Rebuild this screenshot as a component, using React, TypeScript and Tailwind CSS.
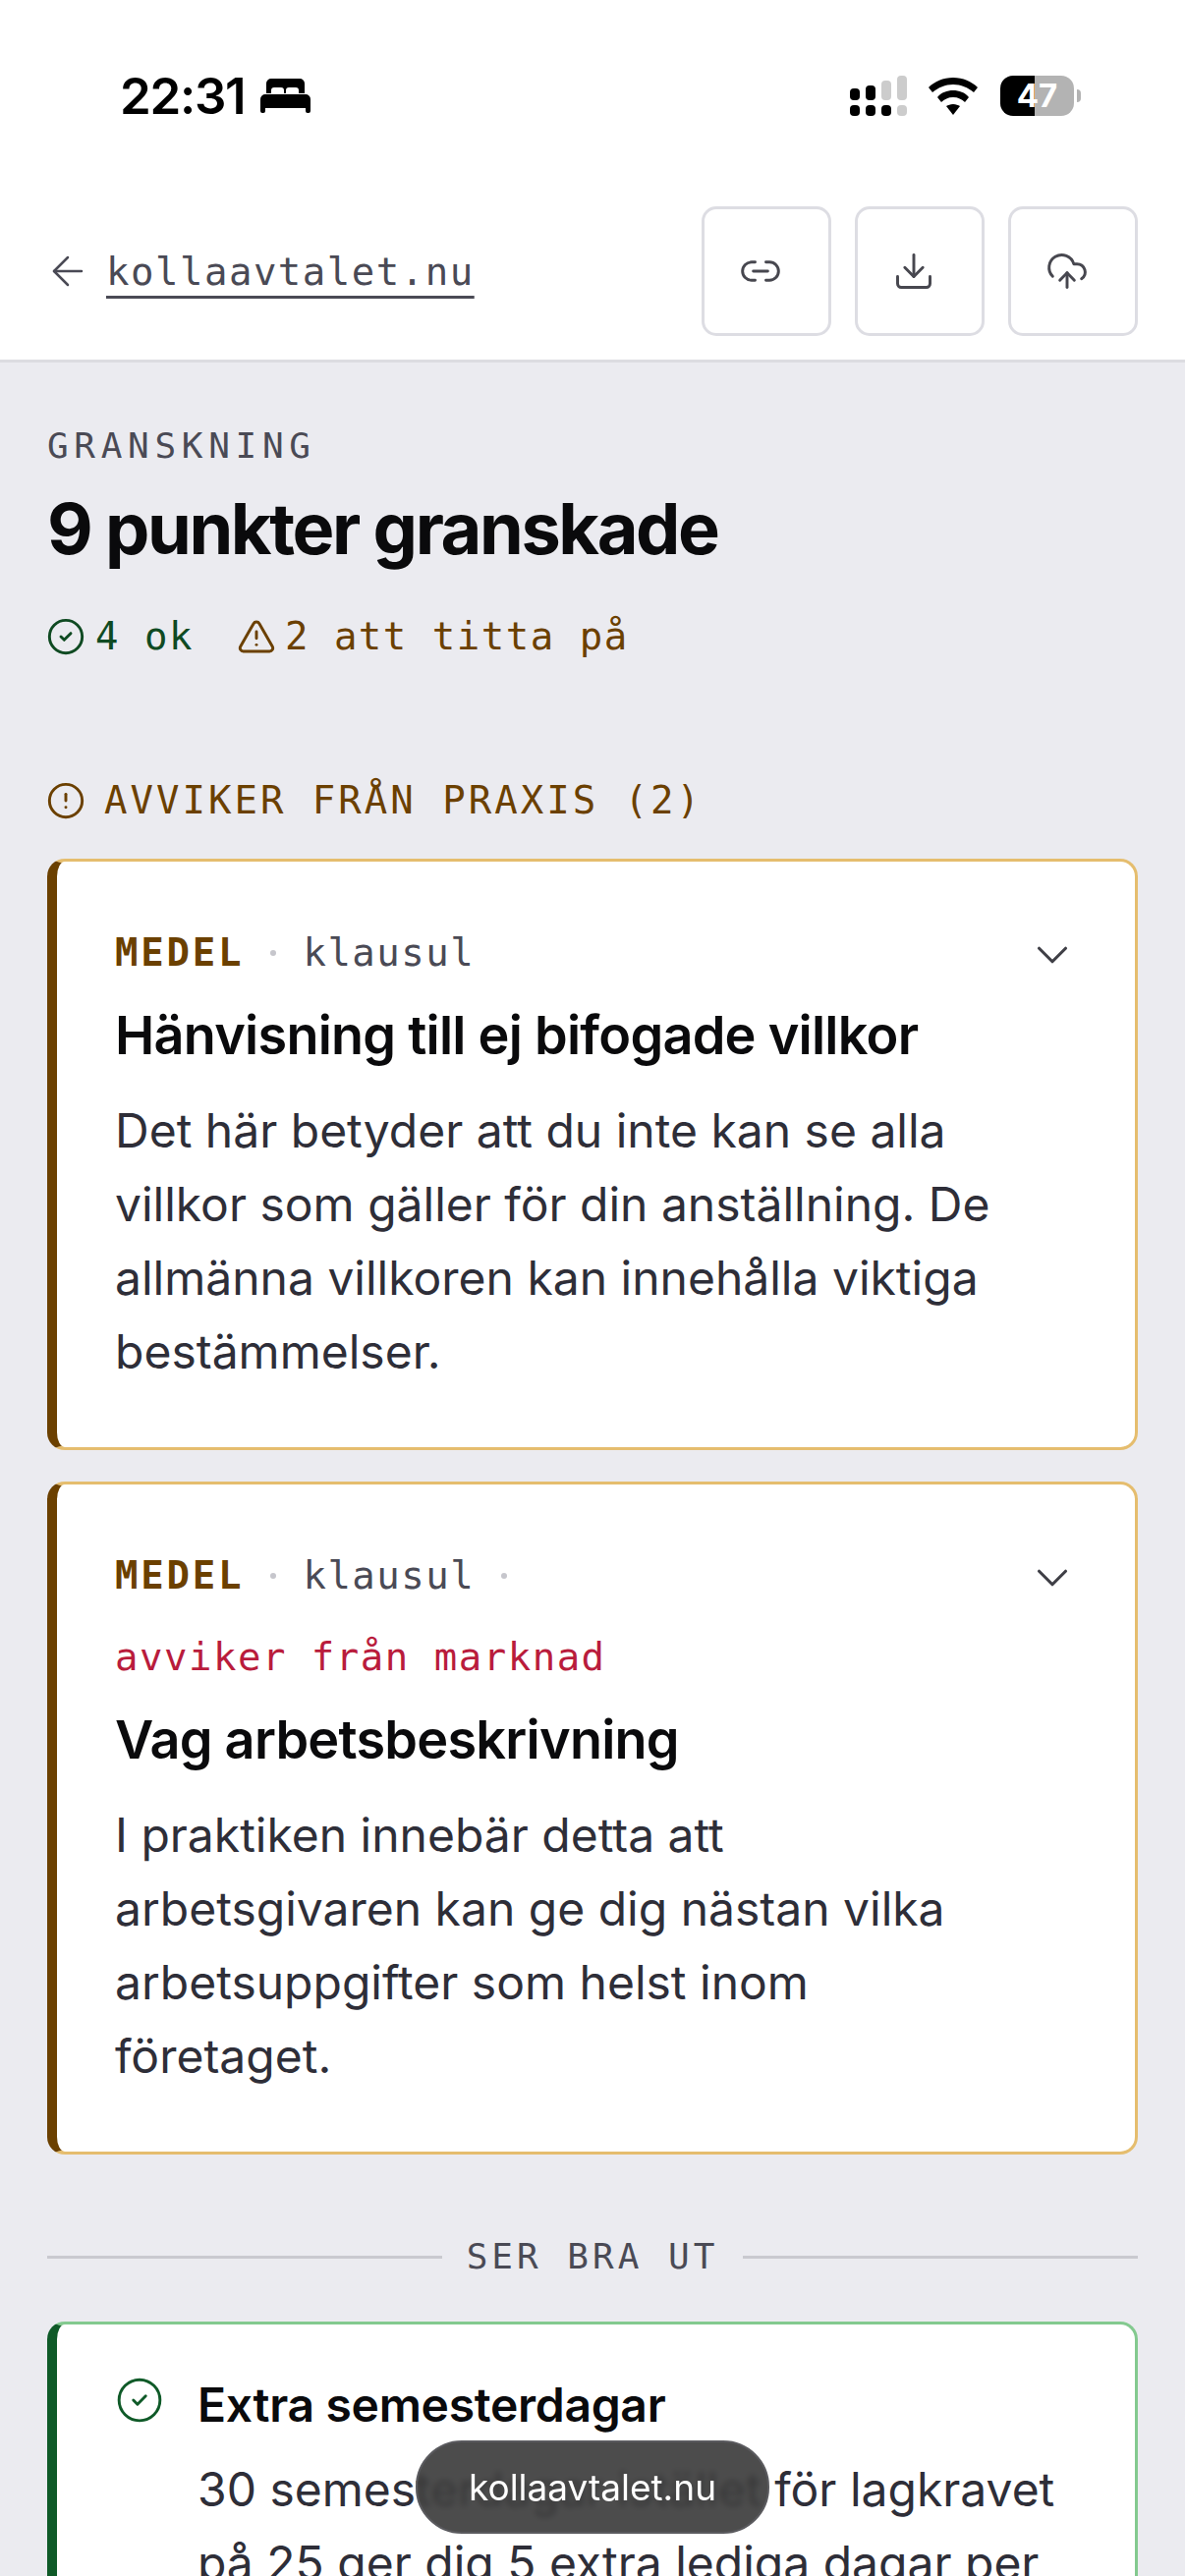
import { AlertTriangle, ArrowLeft, ChevronDown, CircleAlert, CircleCheck, CloudUpload, Download, Link2 } from "lucide-react"

const MONO = "font-['DejaVu_Sans_Mono',monospace]"

function Bed() {
  return (
    <svg viewBox="0 0 51 35" className="w-[51px] h-[35px] ml-[16px]" fill="black">
      <path d="M6 15V5a5 5 0 0 1 5-5h29a5 5 0 0 1 5 5v10h-6v-3a3 3 0 0 0-3-3h-7a3 3 0 0 0-3 3v3h-2v-3a3 3 0 0 0-3-3h-7a3 3 0 0 0-3 3v3z" />
      <path d="M5 16h41a5 5 0 0 1 5 5v9H0v-9a5 5 0 0 1 5-5zM0 30h5v3a2 2 0 0 1-2 2H2a2 2 0 0 1-2-2zM46 30h5v3a2 2 0 0 1-2 2h-1a2 2 0 0 1-2-2z" />
    </svg>
  )
}

function StatusIcons() {
  return (
    <div className="flex items-center">
      <svg viewBox="0 0 58 41" className="w-[58px] h-[41px]">
        <rect x="0" y="13" width="10" height="12" rx="4" fill="black" />
        <rect x="16" y="10" width="10" height="15" rx="4" fill="black" />
        <rect x="32" y="5" width="10" height="20" rx="4" fill="#cccccc" />
        <rect x="48" y="0" width="10" height="25" rx="4" fill="#cccccc" />
        <rect x="0" y="30" width="10" height="11" rx="4" fill="black" />
        <rect x="16" y="30" width="10" height="11" rx="4" fill="black" />
        <rect x="32" y="30" width="10" height="11" rx="4" fill="black" />
        <rect x="48" y="30" width="10" height="11" rx="4" fill="#cccccc" />
      </svg>
      <svg viewBox="0 0 50 38" className="w-[50px] h-[38px] ml-[22px]" fill="black">
        <path d="M25 0c10 0 19 4 25 10l-4 5C40 10 33 7 25 7S10 10 4 15L0 10C6 4 15 0 25 0z" />
        <path d="M25 13c6 0 12 2 16 7l-4 5c-3-3-7-5-12-5s-9 2-12 5l-4-5c4-5 10-7 16-7z" />
        <path d="M25 27c3 0 5 1 7 2l-7 9-7-9c2-1 4-2 7-2z" />
      </svg>
      <div className="ml-[23px] w-[75px] h-[41px] rounded-[13px] flex items-center justify-center bg-[linear-gradient(90deg,#000000_47%,#b3b3b3_47%)] text-white font-['Inter',sans-serif] font-bold text-[33px] leading-none">
        47
      </div>
      <div className="ml-[3px] w-[4px] h-[13px] rounded-r-full bg-[#b3b3b3]" />
    </div>
  )
}

function IconButton({ children }: { children: React.ReactNode }) {
  return (
    <button className="w-[132px] h-[132px] rounded-[15px] border-[3px] border-[#dddde3] bg-white flex items-center justify-center text-[#47474f] pr-[12px]">
      {children}
    </button>
  )
}

function Header() {
  return (
    <header className="bg-white border-b-[3px] border-[#dcdce1]">
      <div className="h-[210px] pl-[122px] pr-[106px] pb-[92px] flex items-end justify-between">
        <div className="flex items-center h-[41px]">
          <span className="font-['Inter',sans-serif] font-semibold text-[51px] leading-none tracking-[-1.3px] text-black">22:31</span>
          <Bed />
        </div>
        <StatusIcons />
      </div>
      <div className="flex items-center justify-between pl-[45px] pr-[48px] pb-[24px]">
        <a className={`flex items-center gap-[15px] text-[39px] leading-none tracking-[1.5px] text-[#4a4a55] ${MONO}`}>
          <ArrowLeft className="w-[48px] h-[48px]" strokeWidth={1.25} />
          <span className="underline decoration-[3px] underline-offset-[11px]">kollaavtalet.nu</span>
        </a>
        <div className="flex gap-[24px]">
          <IconButton><Link2 className="w-[44px] h-[44px]" strokeWidth={1.6} /></IconButton>
          <IconButton><Download className="w-[44px] h-[44px]" strokeWidth={1.6} /></IconButton>
          <IconButton><CloudUpload className="w-[44px] h-[44px]" strokeWidth={1.6} /></IconButton>
        </div>
      </div>
    </header>
  )
}

function Dot() {
  return <span className="w-[6px] h-[6px] rounded-full bg-[#c6c6cc] mx-[27px] shrink-0" />
}

function IssueCard({ title, body, flagged }: { title: string; body: string; flagged?: boolean }) {
  return (
    <article className="bg-white rounded-[18px] border-[3px] border-l-[10px] border-[#e5bd6e] border-l-[#6b4000] pl-[59px] pr-[60px] pt-[63px] pb-[60px]">
      <div className="flex items-start justify-between">
        <div className={`flex flex-wrap items-center text-[39px] leading-[60px] tracking-[1.5px] ${MONO}`}>
          <span className="font-bold tracking-[2.8px] text-[#6b4000]">MEDEL</span>
          <Dot />
          <span className="text-[#4a4a55]">klausul</span>
          {flagged && <Dot />}
          {flagged && <span className="w-full mt-[23px] text-[#b91c3c]">avviker från marknad</span>}
        </div>
        <ChevronDown className="w-[54px] h-[54px] mt-[5px] mr-[-3px] text-[#3f3f46]" strokeWidth={1.4} />
      </div>
      <h3 className="mt-[16px] font-['Inter',sans-serif] font-semibold text-[54px] leading-[75px] tracking-[-0.75px] text-[#0a0a0c]">{title}</h3>
      <p className="mt-[22px] pr-[60px] font-['Inter',sans-serif] text-[48px] leading-[75px] text-[#2e2e38]">{body}</p>
    </article>
  )
}

export default function App() {
  return (
    <div className="relative w-[1206px] h-[2622px] overflow-hidden bg-[#ebebf0]">
      <Header />
      <main className="px-[48px] pt-[63px]">
        <div className={`text-[36px] leading-[44px] tracking-[5.7px] text-[#4a4a55] ${MONO}`}>GRANSKNING</div>
        <h1 className="mt-[20px] font-['Inter',sans-serif] font-bold text-[72px] leading-[84px] tracking-[-2.4px] text-[#0a0a0c]">9 punkter granskade</h1>
        <div className={`mt-[44px] flex items-center text-[39px] leading-[48px] tracking-[1.5px] ${MONO}`}>
          <CircleCheck className="w-[40px] h-[40px] text-[#0f4a22] ml-[-1px] mr-[10px]" strokeWidth={1.75} />
          <span className="text-[#0f4a22]">4 ok</span>
          <AlertTriangle className="w-[40px] h-[40px] text-[#6b4000] ml-[44px] mr-[9px]" strokeWidth={1.75} />
          <span className="text-[#6b4000]">2 att titta på</span>
        </div>

        <div className={`mt-[119px] flex items-center text-[39px] leading-[48px] tracking-[3px] text-[#6b4000] ${MONO}`}>
          <CircleAlert className="w-[40px] h-[40px] ml-[-1px] mr-[19px]" strokeWidth={1.75} />
          AVVIKER FRÅN PRAXIS (2)
        </div>

        <div className="mt-[35px] flex flex-col gap-[32px]">
          <IssueCard
            title="Hänvisning till ej bifogade villkor"
            body="Det här betyder att du inte kan se alla villkor som gäller för din anställning. De allmänna villkoren kan innehålla viktiga bestämmelser."
          />
          <IssueCard
            flagged
            title="Vag arbetsbeskrivning"
            body="I praktiken innebär detta att arbetsgivaren kan ge dig nästan vilka arbetsuppgifter som helst inom företaget."
          />
        </div>

        <div className="mt-[82px] flex items-center gap-[25px]">
          <div className="flex-1 h-[3px] bg-[#c9c9cf]" />
          <span className={`text-[36px] leading-[44px] tracking-[4px] text-[#4a4a55] ${MONO}`}>SER BRA UT</span>
          <div className="flex-1 h-[3px] bg-[#c9c9cf]" />
        </div>

        <article className="mt-[44px] bg-white rounded-[18px] border-[3px] border-l-[10px] border-[#83c98f] border-l-[#0f5a28] pl-[59px] pr-[60px] pt-[49px] pb-[60px] flex gap-[34px]">
          <CircleCheck className="w-[50px] h-[50px] mt-[3px] text-[#0f5a28] shrink-0" strokeWidth={1.4} />
          <div>
            <h3 className="font-['Inter',sans-serif] font-semibold text-[48px] leading-[66px] tracking-[-0.3px] text-[#0a0a0c]">Extra semesterdagar</h3>
            <p className="mt-[15px] font-['Inter',sans-serif] text-[48px] leading-[75px] text-[#2e2e38]">
              30 semesterdagar istället för lagkravet på 25 ger dig 5 extra lediga dagar per år.
            </p>
          </div>
        </article>
      </main>

      <div className="absolute left-[423px] top-[2484px] w-[360px] h-[95px] rounded-[47px] bg-[#383838]/90 backdrop-blur-[3px] border-[2px] border-[#5a5a5e] flex items-center justify-center font-['Inter',sans-serif] text-[37px] leading-none text-white">
        kollaavtalet.nu
      </div>
    </div>
  )
}
